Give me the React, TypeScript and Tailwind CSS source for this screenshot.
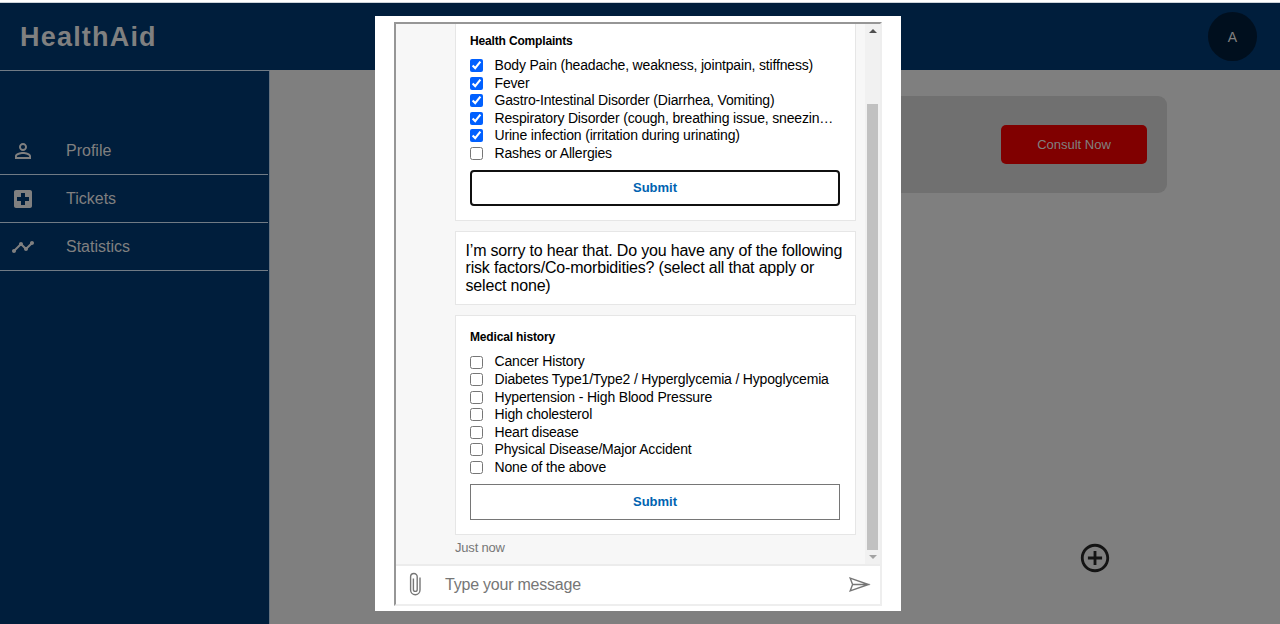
import type { ReactNode } from "react";
import { MdAddCircleOutline, MdLocalHospital, MdPersonOutline, MdTimeline } from "react-icons/md";

const complaints = [
  { label: "Body Pain (headache, weakness, jointpain, stiffness)", checked: true },
  { label: "Fever", checked: true },
  { label: "Gastro-Intestinal Disorder (Diarrhea, Vomiting)", checked: true },
  { label: "Respiratory Disorder (cough, breathing issue, sneezin…", checked: true },
  { label: "Urine infection (irritation during urinating)", checked: true },
  { label: "Rashes or Allergies", checked: false },
];

const history = [
  "Cancer History",
  "Diabetes Type1/Type2 / Hyperglycemia / Hypoglycemia",
  "Hypertension - High Blood Pressure",
  "High cholesterol",
  "Heart disease",
  "Physical Disease/Major Accident",
  "None of the above",
].map((label) => ({ label, checked: false }));

function NavItem({ icon, label }: { icon: ReactNode; label: string }) {
  return (
    <li className="flex h-[47.8px] items-center border-b border-[#707b85] pt-px pl-[11px] text-base text-[#808080]">
      <span className="w-[55px]">{icon}</span>
      {label}
    </li>
  );
}

function Choices({ title, items }: { title: string; items: { label: string; checked: boolean }[] }) {
  return (
    <>
      <h2 className="text-[12px] leading-[16px] font-bold tracking-[-0.16px]">{title}</h2>
      <ul className="mt-[8px]">
        {items.map((item) => (
          <li key={item.label} className="flex h-[17.55px] items-center">
            <input
              type="checkbox"
              defaultChecked={item.checked}
              className="h-[13px] w-[13px] shrink-0 accent-[#0060ff]"
            />
            <span className="ml-[11.5px] text-[14px] leading-[17.5px] tracking-[-0.17px] whitespace-nowrap">
              {item.label}
            </span>
          </li>
        ))}
      </ul>
    </>
  );
}

export default function App() {
  return (
    <div className="relative flex h-[624px] w-[1280px] flex-col overflow-hidden bg-[#7f7f7f] font-['Liberation_Sans',Arial,sans-serif]">
      <div className="h-[3px] shrink-0 border-b border-[#ccd3da] bg-white" />
      <header className="flex h-[67px] shrink-0 items-center justify-between bg-[#001e3c] pr-[23px] pl-[20px]">
        <h1 className="pt-[2px] text-[27px] font-bold tracking-[1.2px] text-[#808080]">HealthAid</h1>
        <div className="flex h-[49px] w-[49px] items-center justify-center rounded-full bg-[#000f1e] pt-px text-[14px] text-[#808080]">
          A
        </div>
      </header>
      <div className="flex min-h-0 flex-1">
        <aside className="w-[269.5px] border-t border-r border-t-[#707b85] border-r-[#65717d] bg-[#001e3c] pr-[0.5px]">
          <ul className="mt-[56.4px]">
            <NavItem icon={<MdPersonOutline size={24} />} label="Profile" />
            <NavItem icon={<MdLocalHospital size={24} />} label="Tickets" />
            <NavItem icon={<MdTimeline size={24} />} label="Statistics" />
          </ul>
        </aside>
        <main className="flex flex-1 flex-col items-end justify-between pt-[25.5px] pb-[49px]">
          <section className="mr-[113px] flex h-[97.5px] w-[784px] items-center justify-end rounded-[9px] bg-[#707070] pr-[20px]">
            <button className="h-[39px] w-[146px] rounded-[5px] bg-[#800000] text-[13px] text-[#808080]">
              Consult Now
            </button>
          </section>
          <button className="mr-[168px] text-[#141414]">
            <MdAddCircleOutline size={34} />
          </button>
        </main>
      </div>

      <div className="absolute top-[16px] left-[375px] flex h-[595px] w-[526px] flex-col bg-white pt-[6px] pl-[19px] text-black">
        <div className="flex h-[584px] w-[488px] flex-col border-2 border-t-[#969696] border-r-[#eeeeee] border-b-[#eeeeee] border-l-[#969696]">
          <div className="flex h-[540px] shrink-0">
            <div className="flex h-full w-[470px] flex-col overflow-hidden bg-[#f7f7f7] pl-[59px]">
              <section className="h-[197px] w-[401px] shrink-0 border border-t-0 border-[#e6e6e6] bg-white px-[14px] pt-[9px]">
                <Choices title="Health Complaints" items={complaints} />
                <button className="mt-[7.7px] h-[36px] w-[370px] rounded-[4px] border-2 border-[#101010] pb-px text-[13px] font-bold text-[#0063b1]">
                  Submit
                </button>
              </section>
              <p className="mt-[10px] h-[74px] w-[401px] shrink-0 border border-[#e6e6e6] bg-white pt-[9.6px] pl-[9.5px] text-[16px] leading-[17.55px] tracking-[-0.18px]">
                I’m sorry to hear that. Do you have any of the following risk factors/Co-morbidities? (select all that
                apply or select none)
              </p>
              <section className="mt-[10px] h-[220px] w-[401px] shrink-0 border border-[#e6e6e6] bg-white px-[14px] pt-[13.4px]">
                <Choices title="Medical history" items={history} />
                <button className="mt-[7.7px] h-[36px] w-[370px] border border-[#767676] text-[13px] font-bold text-[#0063b1]">
                  Submit
                </button>
              </section>
              <span className="mt-[5px] text-[13px] leading-[16px] tracking-[-0.2px] text-[#767676]">Just now</span>
            </div>
            <div className="flex w-[15px] flex-col items-center justify-between bg-[#f1f1f1] py-[5px]">
              <svg width="8" height="4" viewBox="0 0 8 4" className="fill-[#505050]">
                <path d="M0 4L4 0L8 4Z" />
              </svg>
              <div className="mt-[71px] mb-[5px] w-[11px] flex-1 bg-[#c1c1c1]" />
              <svg width="8" height="4" viewBox="0 0 8 4" className="fill-[#a3a3a3]">
                <path d="M0 0L4 4L8 0Z" />
              </svg>
            </div>
          </div>
          <div className="flex flex-1 items-center border-t-2 border-[#ececec] bg-white pr-[9px] pb-[2px] pl-[13px]">
            <svg width="13" height="24" viewBox="0 0 13 24" className="fill-none stroke-[#767676] stroke-[1.4]">
              <path d="M4.4 6.5V17.5a1.9 1.9 0 0 0 3.8 0V4.8a3.3 3.3 0 0 0-6.6 0V18a4.7 4.7 0 0 0 9.4 0V5.5" />
            </svg>
            <span className="ml-[23px] flex-1 pt-px text-[16px] tracking-[-0.22px] text-[#767676]">
              Type your message
            </span>
            <svg width="22" height="15" viewBox="0 0 22 15" className="fill-none stroke-[#767676] stroke-[1.4]">
              <path d="M1.2 1.2L19.5 7.5L1.2 13.8L3.6 7.5ZM3.6 7.5H20.5" />
            </svg>
          </div>
        </div>
      </div>
    </div>
  );
}
